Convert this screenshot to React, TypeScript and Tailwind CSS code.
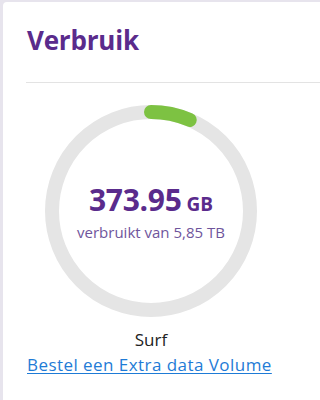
import React from 'react';

const used = 373.95;
const total = 5850;

function UsageRing() {
  const size = 212;
  const stroke = 14;
  const r = (size - stroke) / 2;
  const c = 2 * Math.PI * r;
  const pct = used / total;

  return (
    <div className="relative w-[212px] h-[212px]">
      <svg width={size} height={size} viewBox={`0 0 ${size} ${size}`} className="-rotate-90">
        <circle cx={size / 2} cy={size / 2} r={r} fill="none" stroke="#e5e5e5" strokeWidth={stroke} />
        <circle
          cx={size / 2}
          cy={size / 2}
          r={r}
          fill="none"
          stroke="#7dc242"
          strokeWidth={stroke}
          strokeLinecap="round"
          strokeDasharray={`${c * pct} ${c}`}
        />
      </svg>
      {/* Label in the middle */}
      <div className="absolute inset-0 flex flex-col items-center justify-center pt-[2px]">
        <div className="flex items-baseline gap-[5px] text-[#5a2b8c] font-bold">
          <span className="text-[30px] leading-none tracking-[-0.3px]">373.95</span>
          <span className="text-[19px] leading-none">GB</span>
        </div>
        <div className="mt-[10px] text-[15px] leading-none text-[#6f559c]">verbruikt van 5,85 TB</div>
      </div>
    </div>
  );
}

export default function App() {
  return (
    <div className="h-[400px] w-[320px] bg-[#e7e4ed] pt-[2px] pl-[3px] overflow-hidden font-['Open_Sans',sans-serif]">
      <div className="h-full bg-white rounded-tl-[4px] flex flex-col">
        <div className="pl-[24px] pt-[22px]">
          <h2 className="text-[26px] leading-[32px] font-bold text-[#5a2b8c] tracking-[-0.2px]">Verbruik</h2>
        </div>
        <div className="ml-[23px] mt-[26px] h-px bg-[#e3e3e3]" />

        <div className="w-[250px] ml-[23px] mt-[22px] flex flex-col items-center">
          <UsageRing />
          <div className="mt-[12px] text-[17px] leading-[22px] text-[#222]">Surf</div>
          <a href="#" className="self-start ml-[1px] mt-[3px] text-[17px] leading-[22px] tracking-[0.45px] text-[#1e7bd6] underline underline-offset-2 whitespace-nowrap">
            Bestel een Extra data Volume
          </a>
        </div>
      </div>
    </div>
  );
}
